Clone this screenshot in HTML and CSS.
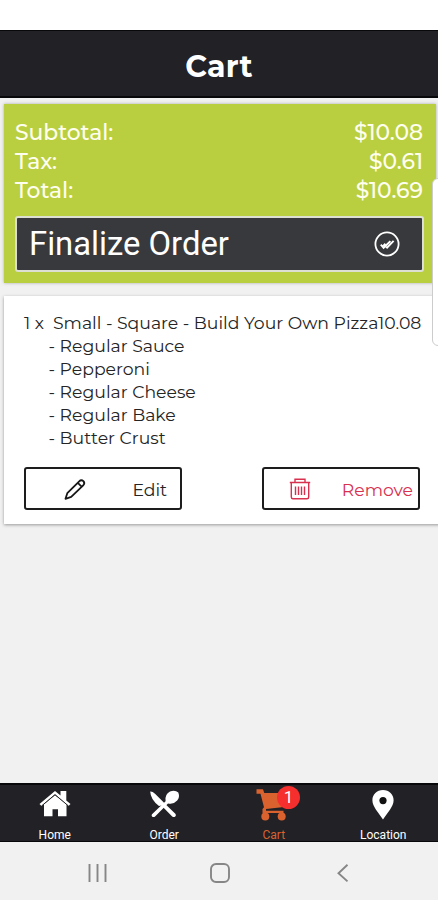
FILE: index.html
```html
<!DOCTYPE html>
<html lang="en">
<head>
<meta charset="utf-8">
<title>Cart</title>
<link rel="stylesheet" href="styles.css">
</head>
<body>
<div class="phone">
  <header class="header"><h1>Cart</h1></header>
  <main class="content">
    <section class="summary">
      <div class="row"><span>Subtotal:</span><span>$10.08</span></div>
      <div class="row"><span>Tax:</span><span>$0.61</span></div>
      <div class="row"><span>Total:</span><span>$10.69</span></div>
      <button class="finalize">
        <span>Finalize Order</span>
        <svg width="28" height="28" viewBox="0 0 28 28" fill="none" stroke="#fff"><circle cx="14" cy="14" r="11.6" stroke-width="1.8"/><path d="M7.8 14.7l2.8 3.1 6.8-6.7M11.4 14.9l2.7 2.8 6.5-6.9M10.2 15.9l2.2-2.1" stroke-width="1.9"/></svg>
      </button>
    </section>
    <section class="item">
      <div class="item-title"><span class="qty">1 x</span><span class="name">Small - Square - Build Your Own Pizza</span><span class="price">10.08</span></div>
      <ul class="options">
        <li>- Regular Sauce</li>
        <li>- Pepperoni</li>
        <li>- Regular Cheese</li>
        <li>- Regular Bake</li>
        <li>- Butter Crust</li>
      </ul>
      <div class="actions">
        <button class="action edit">
          <svg width="24" height="24" viewBox="0 0 24 24" fill="none" stroke="#171717" stroke-width="1.8" stroke-linejoin="round"><path d="M2.5 21.8L4.3 16.2 16.2 4.3Q18.3 2.2 20.4 4.2 22.3 6.3 20.2 8.4L8.2 19.9zM14.8 5.8L18.6 9.6"/></svg>
          <span>Edit</span>
        </button>
        <button class="action remove">
          <svg width="24" height="24" viewBox="0 0 24 24" fill="none" stroke="#d8304f" stroke-width="1.4"><path d="M1.8 5.5H22.2M7 5V2.2H17V5M3.3 5.5V20Q3.3 21.8 5 21.8H19Q20.7 21.8 20.7 20V5.5M7.5 9.5V18M10.5 9.5V18M13.5 9.5V18M16.5 9.5V18"/></svg>
          <span>Remove</span>
        </button>
      </div>
    </section>
  </main>
  <nav class="tabs">
    <a class="tab"><svg width="34" height="32" viewBox="0 0 34 32" fill="#fff"><path d="M17 6.2L28.5 15.2V27.2H20V20.3H14.5V27.2H6V15.2z"/><path d="M1.5 15L17 2 22.5 6.6V2H28.3V11.4L32.5 15 30.5 17 17 5.6 3.5 17z"/><path d="M3.5 17L17 5.6 30.5 17" fill="none" stroke="#222126" stroke-width="1"/></svg><span>Home</span></a>
    <a class="tab"><svg width="34" height="32" viewBox="0 0 34 32" fill="#fff"><path d="M3.2 2.5Q5.5 2.3 8 4.7L15.3 12 17.5 14.2 28.6 25Q29.4 27 28 27.8 26.5 28.5 25.2 27.4L14.4 16.6 12 17Q3.5 10.5 3.2 2.5z"/><path d="M5 25.2L18.6 12.2Q17.5 5.5 23 2.6 28 .7 31.3 3.5 33.1 8 30.2 11.6 26.5 15.8 21 14.5L7.8 27.7Q6.2 28.3 5 27.4 4.2 26.3 5 25.2z"/></svg><span>Order</span></a>
    <a class="tab active"><svg width="34" height="32" viewBox="0 0 34 32" fill="#d9622f"><path d="M.5.3H7L8.3 4H29L25.8 18.3 10 20V21.8H27.5V24H6.5V20L8 18.2 4.5 4.7H.5z"/><circle cx="9.3" cy="27.4" r="4"/><circle cx="25.7" cy="27.4" r="4"/></svg><b class="badge">1</b><span>Cart</span></a>
    <a class="tab"><svg width="34" height="32" viewBox="0 0 34 32"><path d="M17 1C10.8 1 6.4 5.5 6.4 11.2 6.4 17.6 12.5 23.5 17 30.5 21.5 23.5 27.6 17.6 27.6 11.2 27.6 5.5 23.2 1 17 1z" fill="#fff"/><circle cx="17" cy="11.6" r="3.6" fill="#111"/></svg><span>Location</span></a>
  </nav>
  <footer class="system">
    <svg width="24" height="24" viewBox="0 0 24 24" stroke="#868686" stroke-width="1.9"><path d="M4.5 3V21M12.5 3V21M20.5 3V21"/></svg>
    <svg width="24" height="24" viewBox="0 0 24 24" fill="none" stroke="#868686" stroke-width="1.9"><rect x="3" y="3" width="18" height="18" rx="5"/></svg>
    <svg width="24" height="24" viewBox="0 0 24 24" fill="none" stroke="#868686" stroke-width="1.9"><path d="M16.5 3.8L7.5 12.2 16.5 20.4"/></svg>
  </footer>
  <div class="edge-handle"></div>
</div>
</body>
</html>
```
FILE: styles.css
```css
* { box-sizing: border-box; }
body { margin: 0; background: #fff; font-family: Montserrat, Inter, "Open Sans", sans-serif; }
button { font: inherit; cursor: pointer; }
.phone { position: relative; width: 438px; height: 900px; padding-top: 30px; display: flex; flex-direction: column; overflow: hidden; }
.header { height: 68px; flex: none; background: #222126; border-top: 1px solid #08080a; border-bottom: 2px solid #08080a; display: flex; align-items: center; justify-content: center; }
.header h1 { margin: 7px 0 0; font-size: 30px; line-height: 36px; font-weight: 700; color: #fff; letter-spacing: 0.2px; }
.content { flex: 1; background: #f1f1f1; padding: 6px 0 0 4px; }
.summary { width: 432px; height: 179px; padding: 14px 13px 12px 11px; background: #bacf40; box-shadow: 0 0 3px #aaa; }
.row { display: flex; justify-content: space-between; height: 29px; line-height: 29px; font-size: 21.8px; font-weight: 500; color: #fffff0; }
.finalize { width: 409px; height: 56px; margin-top: 11px; padding: 0 21px 0 12px; display: flex; align-items: center; justify-content: space-between; background: #38393c; border: 2px solid #dedfd3; border-radius: 3px; color: #fff; font-family: Roboto, sans-serif; font-size: 32.8px; }
.item { width: 438px; height: 228px; margin-top: 13px; padding: 15px 19px 0 20px; background: #fff; box-shadow: 0 1px 3px #999; color: #242424; font-size: 17.25px; line-height: 23px; }
.item-title { display: flex; white-space: nowrap; width: 398px; }
.qty { width: 29px; }
.name { width: 325px; }
.options { list-style: none; margin: 0; padding: 0 0 0 24.5px; }
.actions { display: flex; justify-content: space-between; width: 396px; margin-top: 18px; }
.action { width: 158px; height: 43px; padding: 0; display: flex; align-items: center; justify-content: space-between; background: #fff; border: 2px solid #1d1d1d; border-radius: 3px; color: #242424; }
.action span { padding-top: 1px; }
.edit { padding: 0 13px 0 37px; }
.remove { padding: 0 5px 0 24px; color: #d8304f; }
.tabs { flex: none; height: 59px; background: #222126; border-top: 2px solid #08080a; border-bottom: 1px solid #08080a; display: grid; grid-template-columns: repeat(4, 1fr); }
.tab { position: relative; display: flex; flex-direction: column; align-items: center; padding-top: 4px; color: #fff; font: 400 12px/14px Roboto, sans-serif; }
.tab span { margin-top: 7px; }
.active { color: #d9622f; }
.active svg { margin-right: 1px; }
.badge { position: absolute; left: 58px; top: 1px; width: 23px; height: 23px; border-radius: 50%; background: #f52f2d; color: #fff; font-size: 17px; font-weight: 400; line-height: 23px; text-align: center; }
.system { flex: none; height: 58px; background: #f1f1f1; display: flex; justify-content: space-between; padding: 19px 83px 0 85px; }
.edge-handle { position: absolute; left: 432px; top: 178px; width: 12px; height: 168px; background: #fff; border: 1px solid #ccc; border-radius: 6px; }
```
